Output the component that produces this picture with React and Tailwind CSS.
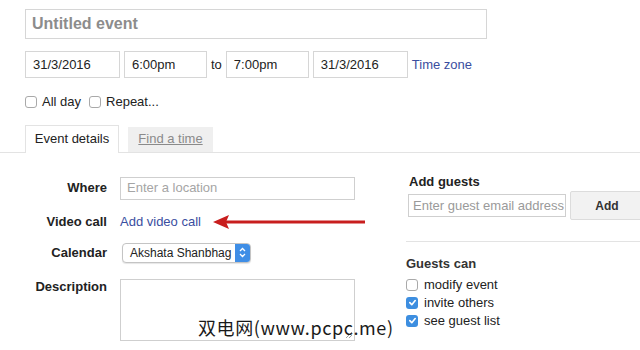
import React from 'react';

const FONT = "font-['Liberation_Sans',Arial,sans-serif]";

function Box({ checked }) {
  if (checked) {
    return (
      <span className="w-[12px] h-[12px] rounded-[3px] bg-[#3d8ee0] flex items-center justify-center shrink-0">
        <svg width="9" height="9" viewBox="0 0 10 10">
          <path d="M2 5.2 L4.2 7.4 L8 2.8" fill="none" stroke="#fff" strokeWidth="1.8" strokeLinecap="round" strokeLinejoin="round" />
        </svg>
      </span>
    );
  }
  return <span className="block w-[12px] h-[12px] rounded-[3px] border border-[#a9a9a9] bg-white shrink-0" />;
}

function Field({ w, children }) {
  return (
    <div className="h-[27px] border border-[#d6d6d6] flex items-center pl-[7px] text-[13px] text-[#222] shrink-0" style={{ width: w }}>
      {children}
    </div>
  );
}

export default function App() {
  return (
    <div className={`relative w-[640px] h-[350px] overflow-hidden bg-white ${FONT}`}>
      <div className="pl-[25px] pt-[9px]">
        {/* title */}
        <div className="w-[462px] h-[30px] border border-[#d6d6d6] flex items-center pl-[6px]">
          <span className="text-[16px] font-bold text-[#8c8c8c]">Untitled event</span>
        </div>

        {/* date / time */}
        <div className="flex items-center mt-[12px] gap-[4px]">
          <Field w={95}>31/3/2016</Field>
          <Field w={83}>6:00pm</Field>
          <span className="text-[13px] text-[#222]">to</span>
          <Field w={83}>7:00pm</Field>
          <Field w={95}>31/3/2016</Field>
          <span className="text-[13px] text-[#3a4ea0]">Time zone</span>
        </div>

        {/* all day / repeat */}
        <div className="flex items-center mt-[14px] text-[13px] text-[#222]">
          <Box />
          <span className="ml-[5px]">All day</span>
          <span className="ml-[8px]"><Box /></span>
          <span className="ml-[5px]">Repeat...</span>
        </div>

        {/* tabs */}
        <div className="flex items-end mt-[12px] h-[28px]">
          <div className="w-[94px] h-[28px] border border-b-0 border-[#e3e3e3] bg-white flex items-center justify-center text-[13px] text-[#222] -mb-[1px] relative z-10">
            Event details
          </div>
          <div className="ml-[9px] w-[85px] h-[25px] bg-[#efefef] flex items-center justify-center text-[13px] text-[#8a8a8a] underline">
            Find a time
          </div>
        </div>
      </div>
      <div className="border-t border-[#e3e3e3]" />

      {/* body */}
      <div className="flex">
        {/* left form */}
        <div className="w-[406px] shrink-0 pt-[24px] text-[13px]">
          <div className="flex items-center">
            <span className="w-[107px] text-right font-bold text-[#222]">Where</span>
            <div className="ml-[13px] w-[235px] h-[23px] border border-[#cfcfcf] flex items-center pl-[6px] text-[#a5a5a5]">
              Enter a location
            </div>
          </div>
          <div className="flex items-center mt-[12px] h-[20px]">
            <span className="w-[107px] text-right font-bold text-[#222]">Video call</span>
            <span className="ml-[13px] text-[#3a4ea0]">Add video call</span>
            <svg className="ml-[12px]" width="153" height="16" viewBox="0 0 153 16">
              <line x1="12" y1="8" x2="152" y2="8" stroke="#c81e1e" strokeWidth="3" />
              <path d="M0 8 L16 1 L13 8 L16 15 Z" fill="#c81e1e" />
            </svg>
          </div>
          <div className="flex items-center mt-[11px]">
            <span className="w-[107px] text-right font-bold text-[#222]">Calendar</span>
            <div className="ml-[15px] w-[129px] h-[20px] rounded-[4px] border border-[#c4c4c4] bg-white shadow-[0_1px_1px_rgba(0,0,0,0.1)] flex items-center overflow-hidden">
              <span className="flex-1 pl-[7px] text-[12px] text-[#222]">Akshata Shanbhag</span>
              <span className="w-[15px] h-full bg-[#3f8ee6] flex items-center justify-center">
                <svg width="7" height="11" viewBox="0 0 7 11">
                  <path d="M1 4 L3.5 1.5 L6 4 M1 7 L3.5 9.5 L6 7" fill="none" stroke="#fff" strokeWidth="1.3" />
                </svg>
              </span>
            </div>
          </div>
          <div className="flex items-start mt-[16px]">
            <span className="w-[107px] text-right font-bold text-[#222] mt-[-2px]">Description</span>
            <div className="ml-[13px] w-[235px] h-[62px] border border-[#cfcfcf] relative">
              <svg className="absolute right-[1px] bottom-[1px]" width="8" height="8" viewBox="0 0 8 8">
                <path d="M7 1 L1 7 M7 4 L4 7" stroke="#888" strokeWidth="0.8" />
              </svg>
            </div>
          </div>
        </div>

        {/* right guests */}
        <div className="flex-1 pt-[19px] text-[13px]">
          <div className="pl-[3px] font-bold text-[#222]">Add guests</div>
          <div className="flex items-center pl-[2px]">
            <div className="w-[158px] h-[23px] border border-[#cfcfcf] flex items-center pl-[4px] text-[#9a9a9a] overflow-hidden whitespace-nowrap">
              Enter guest email address
            </div>
            <div className="ml-[4px] w-[74px] h-[29px] shrink-0 bg-[#f2f2f2] border border-[#dcdcdc] rounded-[2px] flex items-center justify-center font-bold text-[12px] text-[#333]">
              Add
            </div>
          </div>
          <div className="border-t border-[#e3e3e3] mt-[21px]" />
          <div className="mt-[12px] font-bold text-[#333]">Guests can</div>
          <div className="flex flex-col mt-[2px] text-[#222] leading-[18px]">
            <div className="flex items-center gap-[6px]"><Box /> modify event</div>
            <div className="flex items-center gap-[6px]"><Box checked /> invite others</div>
            <div className="flex items-center gap-[6px]"><Box checked /> see guest list</div>
          </div>
        </div>
      </div>

      {/* watermark */}
      <div className="absolute left-[198px] top-[314px] text-[18px] tracking-[0.6px] text-[#1a1a1a] font-['Noto_Sans_CJK_SC','Liberation_Sans',sans-serif] whitespace-nowrap">
        双电网(www.pcpc.me)
      </div>
    </div>
  );
}
